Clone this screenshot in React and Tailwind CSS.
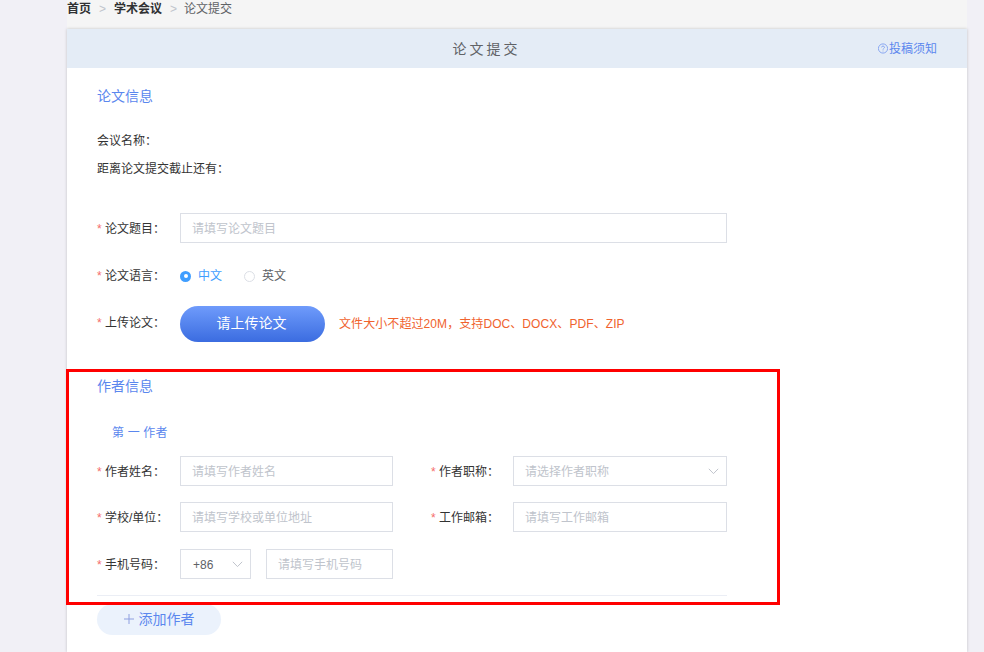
import React from "react";

function Label({ children, w = "w-[83px]", offset = "pt-[2px]" }) {
  return (
    <label className={`${w} ${offset} shrink-0 flex items-center text-xs text-[#333333]`}>
      <span className="text-[#f56c6c] w-2">*</span>
      <span>{children}：</span>
    </label>
  );
}

function Input({ placeholder, className = "w-full" }) {
  return (
    <div className={`${className} h-[30px] border border-[#dcdfe6] bg-white flex items-center pl-[11px] pt-[2px] text-xs text-[#c0c4cc]`}>
      {placeholder}
    </div>
  );
}

function Chevron() {
  return (
    <svg width="11" height="7" viewBox="0 0 11 7" fill="none" stroke="#c0c4cc" strokeWidth="1">
      <path d="M0.8 0.8 L5.5 5.6 L10.2 0.8" />
    </svg>
  );
}

export default function App() {
  return (
    <div
      className="relative h-[652px] w-[984px] overflow-hidden bg-[#f1f0f6] pl-[67px]"
      style={{ fontFamily: '"Liberation Sans", "Noto Sans CJK SC", sans-serif' }}
    >
      <div className="h-full w-[900px] bg-[#f5f5f5] flex flex-col">
        <div className="h-[29px] shrink-0 pb-[12px] flex items-center text-xs">
          <span className="font-bold text-[#303133]">首页</span>
          <span className="mx-[8px] text-[#c0c4cc]">&gt;</span>
          <span className="font-bold text-[#303133]">学术会议</span>
          <span className="ml-[8px] mr-[7px] text-[#c0c4cc]">&gt;</span>
          <span className="text-[#606266]">论文提交</span>
        </div>
        <div className="flex-1 bg-white shadow-[0_0_3px_rgba(0,0,0,0.2)]">
          <div className="h-[39px] bg-[#e4ecf6] flex items-center px-[30px]">
            <div className="flex-1 text-center pr-[2px] text-sm text-[#606266] tracking-[3px]">论文提交</div>
            <div className="flex items-center text-xs text-[#5b87ee]">
              <svg width="10" height="11" viewBox="0 0 10 11" fill="none" stroke="#7f9ff0" strokeWidth="0.9" className="mr-[1px]">
                <circle cx="5" cy="5.5" r="4.6" />
                <path d="M3.5 4.4 C3.5 2.6 6.5 2.6 6.5 4.4 C6.5 5.4 5 5.4 5 6.6 M5 7.6 V8.4" />
              </svg>
              投稿须知
            </div>
          </div>
          <div className="pl-[30px] w-[660px]">
            <div className="mt-[18px] text-sm leading-[20px] text-[#5b87ee]">论文信息</div>
            <div className="mt-[25px] text-xs leading-[20px] text-[#333333]">会议名称：</div>
            <div className="mt-[8px] text-xs leading-[20px] text-[#333333]">距离论文提交截止还有：</div>
            <div className="mt-[34px] flex items-center">
              <Label>论文题目</Label>
              <Input placeholder="请填写论文题目" className="w-[547px]" />
            </div>
            <div className="mt-[18px] flex items-center h-[30px]">
              <Label offset="pt-0">论文语言</Label>
              <div className="flex items-center text-xs">
                <span className="w-[11px] h-[11px] rounded-full bg-[#409eff] flex items-center justify-center">
                  <span className="w-[4px] h-[4px] rounded-full bg-white" />
                </span>
                <span className="ml-[7px] text-[#409eff]">中文</span>
                <span className="ml-[22px] w-[11px] h-[11px] rounded-full border border-[#dcdfe6] bg-white" />
                <span className="ml-[7px] text-[#606266]">英文</span>
              </div>
            </div>
            <div className="mt-[15px] flex items-center">
              <Label offset="pb-[2px]">上传论文</Label>
              <div className="w-[145px] h-[36px] rounded-full bg-gradient-to-b from-[#6f9bfb] to-[#3b6ce0] text-white text-sm flex items-center justify-center pb-[2px] pr-[2px]">
                请上传论文
              </div>
              <div className="ml-[14px] text-xs tracking-[0.08px] text-[#f0622d]">文件大小不超过20M，支持DOC、DOCX、PDF、ZIP</div>
            </div>
            <div className="mt-[34px] text-sm leading-[20px] text-[#5b87ee]">作者信息</div>
            <div className="mt-[27px] ml-[15px] text-xs leading-[20px] tracking-[0.15px] text-[#5b87ee]">第 一 作者</div>
            <div className="mt-[13px] flex items-center">
              <Label>作者姓名</Label>
              <Input placeholder="请填写作者姓名" className="w-[213px]" />
              <div className="ml-[38px] flex items-center">
                <Label w="w-[82px]">作者职称</Label>
                <div className="w-[214px] h-[30px] border border-[#dcdfe6] flex items-center justify-between pl-[11px] pr-[7px] text-xs text-[#c0c4cc]">
                  <span className="pt-[2px]">请选择作者职称</span>
                  <Chevron />
                </div>
              </div>
            </div>
            <div className="mt-[16px] flex items-center">
              <Label>学校/单位</Label>
              <Input placeholder="请填写学校或单位地址" className="w-[213px]" />
              <div className="ml-[38px] flex items-center">
                <Label w="w-[82px]">工作邮箱</Label>
                <Input placeholder="请填写工作邮箱" className="w-[214px]" />
              </div>
            </div>
            <div className="mt-[17px] flex items-center">
              <Label>手机号码</Label>
              <div className="w-[71px] h-[30px] border border-[#dcdfe6] flex items-center justify-between pl-[12px] pr-[7px] text-xs text-[#606266]">
                <span className="pt-[2px]">+86</span>
                <Chevron />
              </div>
              <Input placeholder="请填写手机号码" className="ml-[15px] w-[127px]" />
            </div>
            <div className="mt-[16px] w-[630px] border-t border-[#ebeef5]" />
            <div className="mt-[8px] w-[124px] h-[31px] rounded-full bg-[#ebf2fc] flex items-center justify-center text-sm text-[#5b87ee] pb-[2px]">
              <svg width="10" height="10" viewBox="0 0 10 10" stroke="#8e9fe0" strokeWidth="1" className="mr-[5px]">
                <path d="M0 5 H10 M5 0 V10" />
              </svg>
              添加作者
            </div>
          </div>
        </div>
      </div>
      <div className="absolute left-[66px] top-[369px] w-[714px] h-[236px] border-[3px] border-[#ff0000] pointer-events-none" />
    </div>
  );
}
